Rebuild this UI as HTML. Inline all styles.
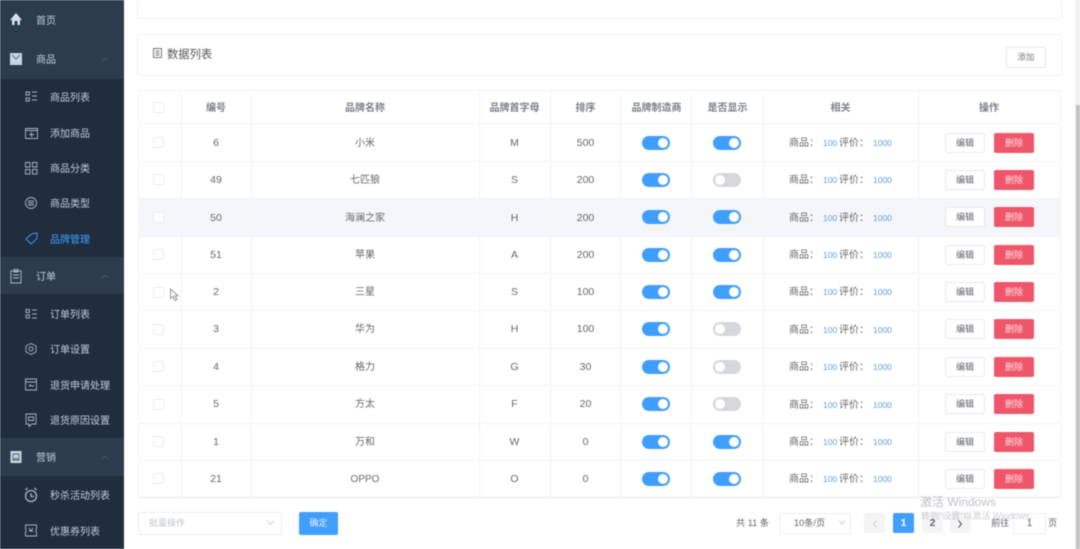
<!DOCTYPE html>
<html><head><meta charset="utf-8"><style>
html,body{margin:0;padding:0;width:1080px;height:549px;overflow:hidden;background:#fff}
body{font-family:"Liberation Sans","Noto Sans CJK SC",sans-serif;position:relative;color:#606266}
#p{position:absolute;left:0;top:0;width:1080px;height:549px;overflow:hidden;filter:blur(.5px)}
.a{position:absolute;white-space:nowrap}
.s{position:absolute;left:0;width:124px}
.m{position:absolute;font-size:10px;color:#c3ced9;line-height:14px;white-space:nowrap;margin-top:2px}
.i{position:absolute}
.l{position:absolute;background:#f3f4f6}
.c{position:absolute;text-align:center;font-size:10.5px;color:#666;line-height:14px;white-space:nowrap;margin-top:1px}
.c[style*="left:251px"]{font-size:10px;margin-top:2px}
.h{font-weight:bold;color:#7b7f86;font-size:10px;margin-top:2px}
.cb{position:absolute;left:153px;width:9px;height:9px;border:1px solid #eaecef;border-radius:2px;background:#fff}
.on,.off{position:absolute;width:28px;height:14px;border-radius:7px;background:#409eff}
.off{background:#d5d7dc}
.on:after,.off:after{content:"";position:absolute;top:2px;left:16px;width:10px;height:10px;border-radius:5px;background:#fff}
.off:after{left:2px}
.b{position:absolute;left:945px;width:38px;height:18px;border:1px solid #e6e8ec;border-radius:2px;background:#fff;color:#5f6268;font-size:9px;line-height:18px;text-align:center}
.d{position:absolute;left:994px;width:40px;height:20px;border-radius:2px;background:#f0566a;color:#fde0e4;font-size:9px;line-height:20px;text-align:center}
.rel{position:absolute;left:789px;font-size:10px;color:#666;line-height:14px;white-space:nowrap;margin-top:2px}
.rel b{position:absolute;top:-1px;font-weight:normal;font-size:8.5px;color:#5c9ddb}
.pg{position:absolute;top:513px;width:21px;height:20px;border-radius:2px;background:#f4f4f5;color:#666;text-align:center;font-size:10.5px;font-weight:bold;line-height:20px}
</style></head><body><div id="p">

<div class="s" style="top:0;height:549px;background:#1f2d3d"></div>
<div class="s" style="top:0;height:79px;background:#2d3c4c"></div>
<div class="s" style="top:257px;height:37px;background:#2d3c4c"></div>
<div class="s" style="top:438px;height:38px;background:#2d3c4c"></div>

<svg class="i" style="left:0;top:0" width="124" height="549" fill="none" stroke="#a9b6c3" stroke-width=".9">
<path d="M10 20 16 13 22 20H20V25H17.500V21H14.500V25H12V20Z" fill="#d7e1ea" stroke="none"/>
<path d="M10 53H22V65H10Z" fill="#c9d5e0" stroke="none"/><path d="M12 55 16 59 20 55" stroke="#5a6b7c"/>
<path d="M102 60.500 105 58.500 108 60.500" stroke="#4c5c6d"/>
<path d="M26 92h3.500v3h-3.500zM26 98h3.500v3h-3.500zM32 92h5M32 96h5M32 100h5"/>
<path d="M25.500 128.500H37.500V138.500H25.500ZM25.500 130.500H37.500M31.500 132V137M29 134.500H34"/>
<path d="M25.500 162.500H30V167H25.500ZM32.500 162.500H37V167H32.500ZM25.500 169.500H30V174H25.500ZM32.500 169.500H37V174H32.500Z"/>
<circle cx="31" cy="203" r="5.500"/><path d="M28 201H34M28 203H34M28 205H34"/>
<path d="M26 239 32 233.500 37 233V238.500L31 244Z" stroke="#409eff"/>
<path d="M11 271H21V283H11ZM14 269.500H18V272H14ZM13 275H19M13 278H19" />
<path d="M102 277.500 105 275.500 108 277.500" stroke="#4c5c6d"/>
<path d="M26 309.500h3.500v3h-3.500zM26 315h3.500v3h-3.500zM32 310h5M32 314h5M32 318h5"/>
<path d="M31 343.500 36 346V352L31 354.500 26 352V346Z"/><circle cx="31" cy="349" r="2"/>
<path d="M25.500 379H36.500V390H25.500ZM25.500 382H36.500M29 386H34M29 386 30.500 384.500"/>
<path d="M26 414H36V424H32L29 426.500V424H26ZM28.500 417H33.500V420.500H28.500Z"/>
<path d="M10.500 451H21.500V463H10.500Z" fill="#c9d5e0" stroke="none"/><path d="M13 454H19V460H13ZM13 460 16 458 19 460" stroke="#4b5c6d"/>
<path d="M102 458.500 105 456.500 108 458.500" stroke="#4c5c6d"/>
<circle cx="31" cy="496" r="5.500" stroke-width="1.300"/><path d="M31 493V496.500H34M25.500 490 27.500 488M36.500 490 34.500 488" stroke-width="1.300"/>
<path d="M25.500 525H36.500V529A2 2 0 0 0 36.500 532V536H25.500V532A2 2 0 0 0 25.500 529ZM29 528 31 531 33 528M29 531H33"/>
</svg>
<div class="m" style="left:36px;top:13px">首页</div>
<div class="m" style="left:36px;top:52px">商品</div>
<div class="m" style="left:50px;top:90px">商品列表</div>
<div class="m" style="left:50px;top:126px">添加商品</div>
<div class="m" style="left:50px;top:161px">商品分类</div>
<div class="m" style="left:50px;top:196px">商品类型</div>
<div class="m" style="left:50px;top:232px;color:#409eff">品牌管理</div>
<div class="m" style="left:36px;top:269px">订单</div>
<div class="m" style="left:50px;top:307px">订单列表</div>
<div class="m" style="left:50px;top:342px">订单设置</div>
<div class="m" style="left:50px;top:378px">退货申请处理</div>
<div class="m" style="left:50px;top:413px">退货原因设置</div>
<div class="m" style="left:36px;top:450px">营销</div>
<div class="m" style="left:50px;top:488px">秒杀活动列表</div>
<div class="m" style="left:50px;top:524px">优惠券列表</div>

<div class="a" style="left:137px;top:-2px;width:923px;height:19px;border:1px solid #f2f3f5;border-radius:2px"></div>
<div class="a" style="left:137px;top:34px;width:923px;height:40px;border:1px solid #f2f3f5;border-radius:2px"></div>
<svg class="i" style="left:153px;top:48px" width="10" height="11" fill="none" stroke="#777"><path d="M.5 .5H8.500V9.500H.5ZM2.500 3H6.500M2.500 5H6.500M2.500 7H6.500"/></svg>
<div class="a" style="left:167px;top:47px;font-size:11.300px;line-height:16px;color:#555">数据列表</div>
<div class="a" style="left:1006px;top:47px;width:38px;height:19px;border:1px solid #e6e8ec;border-radius:2px;font-size:8.500px;line-height:19px;text-align:center;color:#777">添加</div>

<div class="a" style="left:138px;top:199px;width:922px;height:37px;background:#f5f6f9"></div>
<div class="l" style="left:138px;top:90px;width:922px;height:1px"></div>
<div class="l" style="left:138px;top:123px;width:922px;height:1px"></div>
<div class="l" style="left:138px;top:161px;width:922px;height:1px"></div>
<div class="l" style="left:138px;top:198px;width:922px;height:1px"></div>
<div class="l" style="left:138px;top:236px;width:922px;height:1px"></div>
<div class="l" style="left:138px;top:273px;width:922px;height:1px"></div>
<div class="l" style="left:138px;top:310px;width:922px;height:1px"></div>
<div class="l" style="left:138px;top:348px;width:922px;height:1px"></div>
<div class="l" style="left:138px;top:385px;width:922px;height:1px"></div>
<div class="l" style="left:138px;top:423px;width:922px;height:1px"></div>
<div class="l" style="left:138px;top:460px;width:922px;height:1px"></div>
<div class="l" style="left:138px;top:497px;width:922px;height:1px;background:#e6e8ec"></div>
<div class="l" style="left:138px;top:90px;width:1px;height:408px"></div>
<div class="l" style="left:181px;top:90px;width:1px;height:408px"></div>
<div class="l" style="left:251px;top:90px;width:1px;height:408px"></div>
<div class="l" style="left:479px;top:90px;width:1px;height:408px"></div>
<div class="l" style="left:550px;top:90px;width:1px;height:408px"></div>
<div class="l" style="left:620px;top:90px;width:1px;height:408px"></div>
<div class="l" style="left:691px;top:90px;width:1px;height:408px"></div>
<div class="l" style="left:763px;top:90px;width:1px;height:408px"></div>
<div class="l" style="left:918px;top:90px;width:1px;height:408px"></div>
<div class="l" style="left:1060px;top:90px;width:1px;height:408px"></div>

<div class="cb" style="top:102px"></div>
<div class="c h" style="left:181px;width:70px;top:100px">编号</div>
<div class="c h" style="left:251px;width:228px;top:100px">品牌名称</div>
<div class="c h" style="left:479px;width:71px;top:100px">品牌首字母</div>
<div class="c h" style="left:550px;width:71px;top:100px">排序</div>
<div class="c h" style="left:621px;width:71px;top:100px">品牌制造商</div>
<div class="c h" style="left:692px;width:71px;top:100px">是否显示</div>
<div class="c h" style="left:763px;width:155px;top:100px">相关</div>
<div class="c h" style="left:918px;width:142px;top:100px">操作</div>

<!-- rows -->
<div class="cb" style="top:137px"></div><div class="c" style="left:181px;width:70px;top:135px">6</div><div class="c" style="left:251px;width:228px;top:135px">小米</div><div class="c" style="left:479px;width:71px;top:135px">M</div><div class="c" style="left:550px;width:71px;top:135px">500</div><div class="on" style="left:642px;top:136px"></div><div class="on" style="left:713px;top:136px"></div><div class="rel" style="top:135px">商品：<b style="left:34px">100</b><span style="position:absolute;left:50px">评价：</span><b style="left:84px">1000</b></div><div class="b" style="top:133px">编辑</div><div class="d" style="top:133px">删除</div>
<div class="cb" style="top:174px"></div><div class="c" style="left:181px;width:70px;top:172px">49</div><div class="c" style="left:251px;width:228px;top:172px">七匹狼</div><div class="c" style="left:479px;width:71px;top:172px">S</div><div class="c" style="left:550px;width:71px;top:172px">200</div><div class="on" style="left:642px;top:173px"></div><div class="off" style="left:713px;top:173px"></div><div class="rel" style="top:172px">商品：<b style="left:34px">100</b><span style="position:absolute;left:50px">评价：</span><b style="left:84px">1000</b></div><div class="b" style="top:170px">编辑</div><div class="d" style="top:170px">删除</div>
<div class="cb" style="top:212px"></div><div class="c" style="left:181px;width:70px;top:210px">50</div><div class="c" style="left:251px;width:228px;top:210px">海澜之家</div><div class="c" style="left:479px;width:71px;top:210px">H</div><div class="c" style="left:550px;width:71px;top:210px">200</div><div class="on" style="left:642px;top:210px"></div><div class="on" style="left:713px;top:210px"></div><div class="rel" style="top:210px">商品：<b style="left:34px">100</b><span style="position:absolute;left:50px">评价：</span><b style="left:84px">1000</b></div><div class="b" style="top:207px">编辑</div><div class="d" style="top:207px">删除</div>
<div class="cb" style="top:249px"></div><div class="c" style="left:181px;width:70px;top:247px">51</div><div class="c" style="left:251px;width:228px;top:247px">苹果</div><div class="c" style="left:479px;width:71px;top:247px">A</div><div class="c" style="left:550px;width:71px;top:247px">200</div><div class="on" style="left:642px;top:248px"></div><div class="on" style="left:713px;top:248px"></div><div class="rel" style="top:247px">商品：<b style="left:34px">100</b><span style="position:absolute;left:50px">评价：</span><b style="left:84px">1000</b></div><div class="b" style="top:245px">编辑</div><div class="d" style="top:245px">删除</div>
<div class="cb" style="top:287px"></div><div class="c" style="left:181px;width:70px;top:284px">2</div><div class="c" style="left:251px;width:228px;top:284px">三星</div><div class="c" style="left:479px;width:71px;top:284px">S</div><div class="c" style="left:550px;width:71px;top:284px">100</div><div class="on" style="left:642px;top:285px"></div><div class="on" style="left:713px;top:285px"></div><div class="rel" style="top:284px">商品：<b style="left:34px">100</b><span style="position:absolute;left:50px">评价：</span><b style="left:84px">1000</b></div><div class="b" style="top:282px">编辑</div><div class="d" style="top:282px">删除</div>
<div class="cb" style="top:324px"></div><div class="c" style="left:181px;width:70px;top:321px">3</div><div class="c" style="left:251px;width:228px;top:321px">华为</div><div class="c" style="left:479px;width:71px;top:321px">H</div><div class="c" style="left:550px;width:71px;top:321px">100</div><div class="on" style="left:642px;top:322px"></div><div class="off" style="left:713px;top:322px"></div><div class="rel" style="top:322px">商品：<b style="left:34px">100</b><span style="position:absolute;left:50px">评价：</span><b style="left:84px">1000</b></div><div class="b" style="top:319px">编辑</div><div class="d" style="top:319px">删除</div>
<div class="cb" style="top:361px"></div><div class="c" style="left:181px;width:70px;top:359px">4</div><div class="c" style="left:251px;width:228px;top:359px">格力</div><div class="c" style="left:479px;width:71px;top:359px">G</div><div class="c" style="left:550px;width:71px;top:359px">30</div><div class="on" style="left:642px;top:360px"></div><div class="off" style="left:713px;top:360px"></div><div class="rel" style="top:359px">商品：<b style="left:34px">100</b><span style="position:absolute;left:50px">评价：</span><b style="left:84px">1000</b></div><div class="b" style="top:357px">编辑</div><div class="d" style="top:357px">删除</div>
<div class="cb" style="top:399px"></div><div class="c" style="left:181px;width:70px;top:396px">5</div><div class="c" style="left:251px;width:228px;top:396px">方太</div><div class="c" style="left:479px;width:71px;top:396px">F</div><div class="c" style="left:550px;width:71px;top:396px">20</div><div class="on" style="left:642px;top:397px"></div><div class="off" style="left:713px;top:397px"></div><div class="rel" style="top:397px">商品：<b style="left:34px">100</b><span style="position:absolute;left:50px">评价：</span><b style="left:84px">1000</b></div><div class="b" style="top:394px">编辑</div><div class="d" style="top:394px">删除</div>
<div class="cb" style="top:436px"></div><div class="c" style="left:181px;width:70px;top:434px">1</div><div class="c" style="left:251px;width:228px;top:434px">万和</div><div class="c" style="left:479px;width:71px;top:434px">W</div><div class="c" style="left:550px;width:71px;top:434px">0</div><div class="on" style="left:642px;top:435px"></div><div class="on" style="left:713px;top:435px"></div><div class="rel" style="top:434px">商品：<b style="left:34px">100</b><span style="position:absolute;left:50px">评价：</span><b style="left:84px">1000</b></div><div class="b" style="top:432px">编辑</div><div class="d" style="top:432px">删除</div>
<div class="cb" style="top:473px"></div><div class="c" style="left:181px;width:70px;top:471px">21</div><div class="c" style="left:251px;width:228px;top:471px">OPPO</div><div class="c" style="left:479px;width:71px;top:471px">O</div><div class="c" style="left:550px;width:71px;top:471px">0</div><div class="on" style="left:642px;top:472px"></div><div class="on" style="left:713px;top:472px"></div><div class="rel" style="top:471px">商品：<b style="left:34px">100</b><span style="position:absolute;left:50px">评价：</span><b style="left:84px">1000</b></div><div class="b" style="top:469px">编辑</div><div class="d" style="top:469px">删除</div>

<svg class="i" style="left:169px;top:288px" width="11" height="14"><path d="M1.500 1V10.500L4 8.500 6 12.500 8 11.500 6 7.800H9Z" fill="#fff" stroke="#888" stroke-width=".9"/></svg>

<div class="a" style="left:138px;top:512px;width:142px;height:21px;border:1px solid #ebedf0;border-radius:2px"></div>
<div class="a" style="left:149px;top:517px;font-size:9px;line-height:13px;color:#c0c4cc">批量操作</div>
<svg class="i" style="left:266px;top:520px" width="9" height="6" fill="none" stroke="#d0d3d9"><path d="M1 .5 4.500 4.500 8 .5"/></svg>
<div class="a" style="left:299px;top:512px;width:39px;height:23px;background:#409eff;border-radius:2px;color:#e3f1ff;font-size:9px;line-height:23px;text-align:center">确定</div>

<div class="a" style="left:736px;top:516px;font-size:9.200px;line-height:14px;color:#606266">共 11 条</div>
<div class="a" style="left:779px;top:513px;width:70px;height:19px;border:1px solid #ebedf0;border-radius:2px"></div>
<div class="a" style="left:794px;top:516px;font-size:9.200px;line-height:14px;color:#606266">10条/页</div>
<svg class="i" style="left:838px;top:520px" width="8" height="6" fill="none" stroke="#d0d3d9"><path d="M1 .5 4 4 7 .5"/></svg>
<div class="pg" style="left:864px"></div>
<svg class="i" style="left:872px;top:520px" width="6" height="8" fill="none" stroke="#cdd0d6"><path d="M4.500 .5 1.500 4 4.500 7.500"/></svg>
<div class="pg" style="left:893px;background:#409eff;color:#fff">1</div>
<div class="pg" style="left:922px">2</div>
<div class="pg" style="left:950px"></div>
<svg class="i" style="left:957px;top:520px" width="6" height="8" fill="none" stroke="#555"><path d="M1.500 .5 4.500 4 1.500 7.500"/></svg>
<div class="a" style="left:991px;top:516px;font-size:9.200px;line-height:14px;color:#606266">前往</div>
<div class="a" style="left:1013px;top:513px;width:31px;height:19px;border:1px solid #ebedf0;border-radius:2px;font-size:10px;line-height:19px;text-align:center">1</div>
<div class="a" style="left:1048px;top:516px;font-size:9.200px;line-height:14px;color:#606266">页</div>

<div class="a" style="left:920px;top:495px;font-size:12px;line-height:15px;color:#b4b6ba;opacity:.85">激活 Windows</div>
<div class="a" style="left:921px;top:510px;font-size:9px;line-height:12px;color:#c4c6ca;opacity:.85">转到"设置"以激活 Windows。</div>

<div class="a" style="left:1075px;top:0;width:5px;height:549px;background:#f1f1f1"></div>
<div class="a" style="left:1076px;top:105px;width:4px;height:444px;background:#c1c1c1"></div>
</div></body></html>
